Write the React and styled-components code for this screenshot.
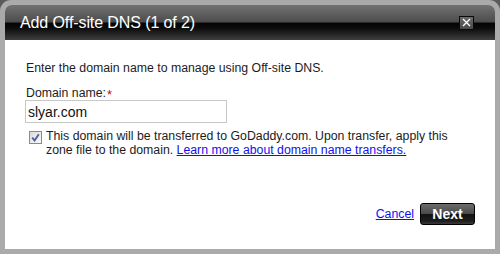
import React from 'react';
import styled, { createGlobalStyle } from 'styled-components';

const GlobalStyle = createGlobalStyle`
  body {
    margin: 0;
    background: #5a5a5a;
    font-family: "Liberation Sans", Arial, sans-serif;
  }
`;

const Frame = styled.div`
  width: 500px;
  height: 254px;
  box-sizing: border-box;
  padding: 5px;
  background: #aaaaaa;
  border-radius: 11px 11px 0 0;
  display: flex;
  flex-direction: column;
`;

const Header = styled.div`
  height: 35px;
  flex: none;
  display: flex;
  align-items: center;
  justify-content: space-between;
  padding: 0 21px 0 15px;
  border-radius: 7px 7px 0 0;
  background: linear-gradient(
    to bottom,
    #727272 0%,
    #4c4c4c 49%,
    #050505 51%,
    #0a0a0a 65%,
    #3e3e3e 100%
  );
`;

const Title = styled.h1`
  margin: 0;
  font-size: 16px;
  font-weight: normal;
  color: #ffffff;
  letter-spacing: -0.1px;
`;

const CloseButton = styled.button`
  width: 15px;
  height: 14px;
  padding: 0;
  border: 1px solid #0a0a0a;
  background: linear-gradient(to bottom, #6a6a6a, #4a4a4a);
  display: flex;
  align-items: center;
  justify-content: center;
  cursor: pointer;
`;

const Body = styled.div`
  flex: 1;
  background: #ffffff;
  padding: 21px 20px 0 20px;
  display: flex;
  flex-direction: column;
  font-size: 12.3px;
  color: #1c1c1c;
`;

const Intro = styled.p`
  margin: 0 0 10px 1px;
  line-height: 15px;
`;

const Label = styled.label`
  display: block;
  line-height: 14px;
  margin-left: 1px;
`;

const Required = styled.span`
  color: #e00000;
  font-size: 13px;
  position: relative;
  top: 2px;
  margin-left: 1px;
`;

const TextInput = styled.input`
  display: block;
  width: 202px;
  height: 23px;
  box-sizing: border-box;
  margin: 0;
  padding: 0 2px;
  border: 1px solid #c8c8c8;
  font-family: "Liberation Sans", Arial, sans-serif;
  font-size: 14px;
  color: #111;
  outline: none;
`;

const CheckRow = styled.div`
  display: flex;
  align-items: flex-start;
  gap: 4px;
  margin: 6px 0 0 4px;
  line-height: 14px;
`;

const CheckBox = styled.span`
  flex: none;
  width: 11px;
  height: 11px;
  margin-top: 2px;
  border: 1px solid #8a8a8a;
  background: linear-gradient(to bottom right, #dcdcdc, #f8f8f8);
  display: flex;
  align-items: center;
  justify-content: center;
`;

const Link = styled.a`
  color: #1010ee;
  text-decoration: underline;
  cursor: pointer;
`;

const Footer = styled.div`
  margin-top: auto;
  margin-bottom: 24px;
  display: flex;
  justify-content: flex-end;
  align-items: center;
  gap: 6px;
`;

const NextButton = styled.button`
  width: 55px;
  height: 22px;
  border: 1px solid #000;
  border-radius: 3px;
  padding: 0;
  background: linear-gradient(
    to bottom,
    #6c6c6c 0%,
    #4a4a4a 48%,
    #121212 52%,
    #1e1e1e 85%,
    #3a3a3a 100%
  );
  color: #ffffff;
  font-family: "Liberation Sans", Arial, sans-serif;
  font-size: 14px;
  font-weight: bold;
  cursor: pointer;
`;

export default function App() {
  return (
    <>
      <GlobalStyle />
      <Frame>
        <Header>
          <Title>Add Off-site DNS (1 of 2)</Title>
          <CloseButton aria-label="Close">
            <svg width="9" height="9" viewBox="0 0 9 9">
              <path d="M1 1 L8 8 M8 1 L1 8" stroke="#fff" strokeWidth="1.3" />
            </svg>
          </CloseButton>
        </Header>
        <Body>
          <Intro>Enter the domain name to manage using Off-site DNS.</Intro>
          <Label>
            Domain name:<Required>*</Required>
          </Label>
          <TextInput defaultValue="slyar.com" />
          <CheckRow>
            <CheckBox>
              <svg width="9" height="9" viewBox="0 0 9 9">
                <path d="M1.2 4.6 L3.6 7.4 L7.8 1.2" fill="none" stroke="#4a5f9a" strokeWidth="1.8" />
              </svg>
            </CheckBox>
            <span>
              This domain will be transferred to GoDaddy.com. Upon transfer, apply this
              zone file to the domain. <Link>Learn more about domain name transfers.</Link>
            </span>
          </CheckRow>
          <Footer>
            <Link>Cancel</Link>
            <NextButton>Next</NextButton>
          </Footer>
        </Body>
      </Frame>
    </>
  );
}
